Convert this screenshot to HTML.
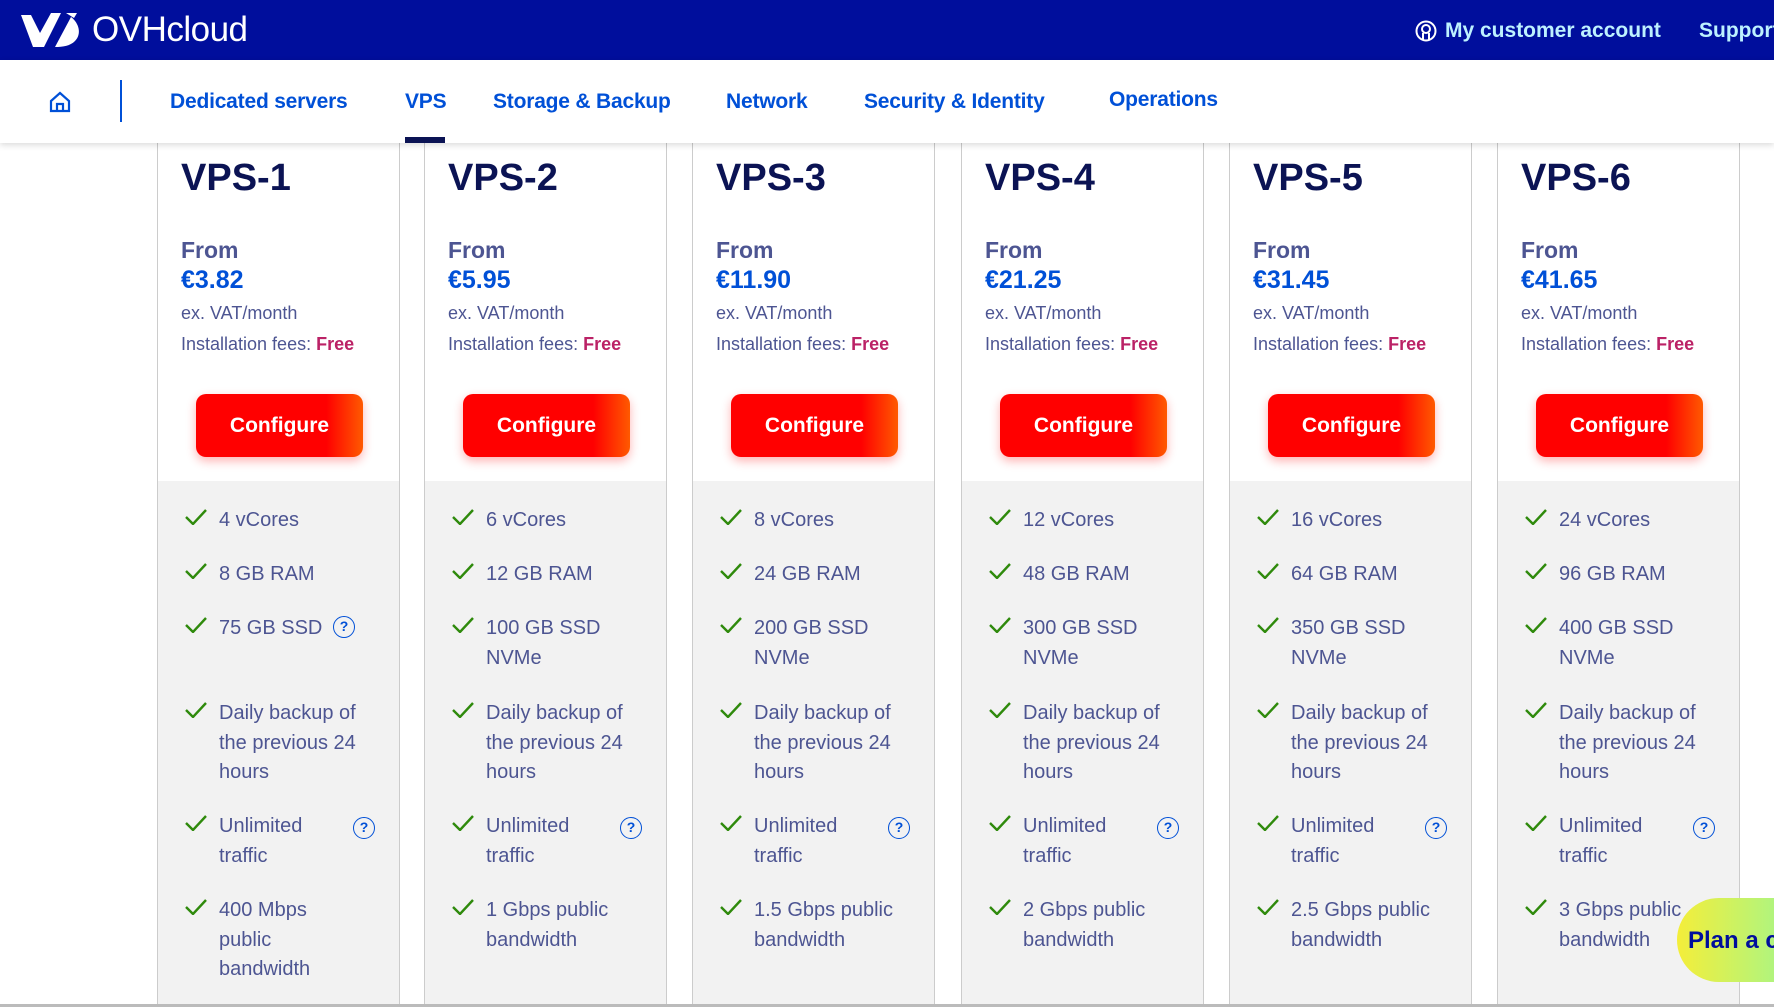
<!DOCTYPE html>
<html><head><meta charset="utf-8"><style>
*{margin:0;padding:0;box-sizing:border-box}
body{width:1774px;height:1007px;overflow:hidden;background:#fff;font-family:"Liberation Sans",sans-serif;position:relative}
.hdr{position:absolute;left:0;top:0;width:1774px;height:60px;background:#000e9c}
.nav{position:absolute;left:0;top:60px;width:1774px;height:83px;background:#fff;box-shadow:0 2px 6px rgba(0,0,0,.15);z-index:5}
.ni{position:absolute;top:90px;font-size:21px;font-weight:bold;color:#0050d7;z-index:6;letter-spacing:-0.2px}
.col{position:absolute;top:143px;width:243px;height:861px;border-left:1px solid #ccc;border-right:1px solid #ccc;background:#fff}
.grey{position:absolute;left:0;top:338px;width:241px;height:523px;background:#f2f2f2}
.t{position:absolute;left:23px;top:14px;font-size:38px;font-weight:bold;color:#0b1354}
.from{position:absolute;top:94px;font-size:23px;font-weight:bold;color:#4d5592}
.abs{position:absolute;left:3px}
.pr{top:123px;font-size:25px;font-weight:bold;color:#0050d7}
.vat{top:160px;font-size:18px;color:#4d5592}
.fee{top:191px;font-size:18px;color:#4d5592}
.fee b{color:#bb2266}
.in{position:absolute;left:23px;top:0;width:200px;height:100%}
.btn{position:absolute;left:37px;top:251px;width:167px;height:63px;border-radius:10px;background:linear-gradient(90deg,#f00 0%,#f00 78%,#ff5a00 100%);box-shadow:0 4px 10px rgba(255,0,0,.3);color:#fff;font-size:21px;font-weight:bold;text-align:center;line-height:63px}
.f{position:absolute;left:61px;font-size:20px;line-height:29.5px;color:#4d5592;width:160px;margin-top:2px}
.ck{position:absolute;left:27px;width:22px;height:16px;margin-top:-4px}
.q{position:absolute;width:22px;height:22px;border:1.6px solid #0050d7;border-radius:50%;color:#0050d7;font-size:14px;font-weight:bold;text-align:center;line-height:19px}
</style></head><body>
<div class="hdr">
<svg style="position:absolute;left:21px;top:12px" width="62" height="36" viewBox="0 0 62 36"><path d="M0 3 L10 3 L19 21 L30 1 L40 1 L23 35 L12 35 Z" fill="#fff"/><path d="M34 35 L50 5 C58 11 61 22 54 29 C49 34 42 35 34 35 Z M45 1 L56 1 L53 6 Z" fill="#fff"/></svg>
<div style="position:absolute;left:92px;top:10px;font-size:35px;color:#fff;letter-spacing:-0.5px">OVHcloud</div>
<svg style="position:absolute;left:1415px;top:20px" width="22" height="22" viewBox="0 0 22 22"><circle cx="11" cy="11" r="9.5" fill="none" stroke="#fff" stroke-width="2"/><circle cx="11" cy="9" r="4" fill="none" stroke="#fff" stroke-width="2"/><path d="M8 20 L8 13 M14 20 L14 13" stroke="#fff" stroke-width="2"/></svg>
<div style="position:absolute;left:1445px;top:19px;font-size:21px;font-weight:bold;color:#bdf1ff">My customer account</div>
<div style="position:absolute;left:1699px;top:19px;font-size:21px;font-weight:bold;color:#bdf1ff;white-space:nowrap">Support</div>
</div>
<div class="nav"></div>
<svg style="position:absolute;left:48px;top:91px;z-index:6" width="24" height="22" viewBox="0 0 24 22"><path d="M3 10 L12 2 L21 10 V20 H3 Z" fill="none" stroke="#0050d7" stroke-width="2.2"/><path d="M9 20 V13 H15 V20" fill="none" stroke="#0050d7" stroke-width="2.2"/></svg>
<div style="position:absolute;left:120px;top:80px;width:2px;height:42px;background:#0050d7;z-index:6"></div>
<div class="ni" style="left:170px">Dedicated servers</div>
<div class="ni" style="left:405px">VPS</div>
<div style="position:absolute;left:405px;top:137px;width:40px;height:6px;background:#0b1354;z-index:6"></div>
<div class="ni" style="left:493px">Storage &amp; Backup</div>
<div class="ni" style="left:726px">Network</div>
<div class="ni" style="left:864px">Security &amp; Identity</div>
<div class="ni" style="left:1109px;top:88px">Operations</div>

<div class="col" style="left:157px"><div class="grey"></div><div class="in">
<div class="t" style="left:0">VPS-1</div><div class="from abs" style="left:0">From</div><div class="abs pr" style="left:0">€3.82</div><div class="abs vat" style="left:0">ex. VAT/month</div><div class="abs fee" style="left:0;white-space:nowrap">Installation fees: <b>Free</b></div></div>
<a class="btn" style="left:38px">Configure</a>
<svg class="ck" style="top:370px" viewBox="0 0 22 16"><path d="M1 8 L8 15 L21 1" fill="none" stroke="#2f8a0c" stroke-width="2.4"/></svg><div class="f" style="top:361px">4 vCores</div>
<svg class="ck" style="top:424px" viewBox="0 0 22 16"><path d="M1 8 L8 15 L21 1" fill="none" stroke="#2f8a0c" stroke-width="2.4"/></svg><div class="f" style="top:415px">8 GB RAM</div>
<svg class="ck" style="top:478px" viewBox="0 0 22 16"><path d="M1 8 L8 15 L21 1" fill="none" stroke="#2f8a0c" stroke-width="2.4"/></svg><div class="f" style="top:469px">75 GB SSD</div><div class="q" style="left:175px;top:473px">?</div>
<svg class="ck" style="top:563px" viewBox="0 0 22 16"><path d="M1 8 L8 15 L21 1" fill="none" stroke="#2f8a0c" stroke-width="2.4"/></svg><div class="f" style="top:554px">Daily backup of the previous 24 hours</div>
<svg class="ck" style="top:676px" viewBox="0 0 22 16"><path d="M1 8 L8 15 L21 1" fill="none" stroke="#2f8a0c" stroke-width="2.4"/></svg><div class="f" style="top:667px;width:100px">Unlimited traffic</div><div class="q" style="left:195px;top:674px">?</div>
<svg class="ck" style="top:760px" viewBox="0 0 22 16"><path d="M1 8 L8 15 L21 1" fill="none" stroke="#2f8a0c" stroke-width="2.4"/></svg><div class="f" style="top:751px;width:100px">400 Mbps public bandwidth</div>
</div>

<div class="col" style="left:424px"><div class="grey"></div><div class="in">
<div class="t" style="left:0">VPS-2</div><div class="from abs" style="left:0">From</div><div class="abs pr" style="left:0">€5.95</div><div class="abs vat" style="left:0">ex. VAT/month</div><div class="abs fee" style="left:0;white-space:nowrap">Installation fees: <b>Free</b></div></div>
<a class="btn" style="left:38px">Configure</a>
<svg class="ck" style="top:370px" viewBox="0 0 22 16"><path d="M1 8 L8 15 L21 1" fill="none" stroke="#2f8a0c" stroke-width="2.4"/></svg><div class="f" style="top:361px">6 vCores</div>
<svg class="ck" style="top:424px" viewBox="0 0 22 16"><path d="M1 8 L8 15 L21 1" fill="none" stroke="#2f8a0c" stroke-width="2.4"/></svg><div class="f" style="top:415px">12 GB RAM</div>
<svg class="ck" style="top:478px" viewBox="0 0 22 16"><path d="M1 8 L8 15 L21 1" fill="none" stroke="#2f8a0c" stroke-width="2.4"/></svg><div class="f" style="top:469px;width:125px">100 GB SSD NVMe</div>
<svg class="ck" style="top:563px" viewBox="0 0 22 16"><path d="M1 8 L8 15 L21 1" fill="none" stroke="#2f8a0c" stroke-width="2.4"/></svg><div class="f" style="top:554px">Daily backup of the previous 24 hours</div>
<svg class="ck" style="top:676px" viewBox="0 0 22 16"><path d="M1 8 L8 15 L21 1" fill="none" stroke="#2f8a0c" stroke-width="2.4"/></svg><div class="f" style="top:667px;width:100px">Unlimited traffic</div><div class="q" style="left:195px;top:674px">?</div>
<svg class="ck" style="top:760px" viewBox="0 0 22 16"><path d="M1 8 L8 15 L21 1" fill="none" stroke="#2f8a0c" stroke-width="2.4"/></svg><div class="f" style="top:751px">1 Gbps public bandwidth</div>
</div>

<div class="col" style="left:692px"><div class="grey"></div><div class="in">
<div class="t" style="left:0">VPS-3</div><div class="from abs" style="left:0">From</div><div class="abs pr" style="left:0">€11.90</div><div class="abs vat" style="left:0">ex. VAT/month</div><div class="abs fee" style="left:0;white-space:nowrap">Installation fees: <b>Free</b></div></div>
<a class="btn" style="left:38px">Configure</a>
<svg class="ck" style="top:370px" viewBox="0 0 22 16"><path d="M1 8 L8 15 L21 1" fill="none" stroke="#2f8a0c" stroke-width="2.4"/></svg><div class="f" style="top:361px">8 vCores</div>
<svg class="ck" style="top:424px" viewBox="0 0 22 16"><path d="M1 8 L8 15 L21 1" fill="none" stroke="#2f8a0c" stroke-width="2.4"/></svg><div class="f" style="top:415px">24 GB RAM</div>
<svg class="ck" style="top:478px" viewBox="0 0 22 16"><path d="M1 8 L8 15 L21 1" fill="none" stroke="#2f8a0c" stroke-width="2.4"/></svg><div class="f" style="top:469px;width:125px">200 GB SSD NVMe</div>
<svg class="ck" style="top:563px" viewBox="0 0 22 16"><path d="M1 8 L8 15 L21 1" fill="none" stroke="#2f8a0c" stroke-width="2.4"/></svg><div class="f" style="top:554px">Daily backup of the previous 24 hours</div>
<svg class="ck" style="top:676px" viewBox="0 0 22 16"><path d="M1 8 L8 15 L21 1" fill="none" stroke="#2f8a0c" stroke-width="2.4"/></svg><div class="f" style="top:667px;width:100px">Unlimited traffic</div><div class="q" style="left:195px;top:674px">?</div>
<svg class="ck" style="top:760px" viewBox="0 0 22 16"><path d="M1 8 L8 15 L21 1" fill="none" stroke="#2f8a0c" stroke-width="2.4"/></svg><div class="f" style="top:751px">1.5 Gbps public bandwidth</div>
</div>

<div class="col" style="left:961px"><div class="grey"></div><div class="in">
<div class="t" style="left:0">VPS-4</div><div class="from abs" style="left:0">From</div><div class="abs pr" style="left:0">€21.25</div><div class="abs vat" style="left:0">ex. VAT/month</div><div class="abs fee" style="left:0;white-space:nowrap">Installation fees: <b>Free</b></div></div>
<a class="btn" style="left:38px">Configure</a>
<svg class="ck" style="top:370px" viewBox="0 0 22 16"><path d="M1 8 L8 15 L21 1" fill="none" stroke="#2f8a0c" stroke-width="2.4"/></svg><div class="f" style="top:361px">12 vCores</div>
<svg class="ck" style="top:424px" viewBox="0 0 22 16"><path d="M1 8 L8 15 L21 1" fill="none" stroke="#2f8a0c" stroke-width="2.4"/></svg><div class="f" style="top:415px">48 GB RAM</div>
<svg class="ck" style="top:478px" viewBox="0 0 22 16"><path d="M1 8 L8 15 L21 1" fill="none" stroke="#2f8a0c" stroke-width="2.4"/></svg><div class="f" style="top:469px;width:125px">300 GB SSD NVMe</div>
<svg class="ck" style="top:563px" viewBox="0 0 22 16"><path d="M1 8 L8 15 L21 1" fill="none" stroke="#2f8a0c" stroke-width="2.4"/></svg><div class="f" style="top:554px">Daily backup of the previous 24 hours</div>
<svg class="ck" style="top:676px" viewBox="0 0 22 16"><path d="M1 8 L8 15 L21 1" fill="none" stroke="#2f8a0c" stroke-width="2.4"/></svg><div class="f" style="top:667px;width:100px">Unlimited traffic</div><div class="q" style="left:195px;top:674px">?</div>
<svg class="ck" style="top:760px" viewBox="0 0 22 16"><path d="M1 8 L8 15 L21 1" fill="none" stroke="#2f8a0c" stroke-width="2.4"/></svg><div class="f" style="top:751px">2 Gbps public bandwidth</div>
</div>

<div class="col" style="left:1229px"><div class="grey"></div><div class="in">
<div class="t" style="left:0">VPS-5</div><div class="from abs" style="left:0">From</div><div class="abs pr" style="left:0">€31.45</div><div class="abs vat" style="left:0">ex. VAT/month</div><div class="abs fee" style="left:0;white-space:nowrap">Installation fees: <b>Free</b></div></div>
<a class="btn" style="left:38px">Configure</a>
<svg class="ck" style="top:370px" viewBox="0 0 22 16"><path d="M1 8 L8 15 L21 1" fill="none" stroke="#2f8a0c" stroke-width="2.4"/></svg><div class="f" style="top:361px">16 vCores</div>
<svg class="ck" style="top:424px" viewBox="0 0 22 16"><path d="M1 8 L8 15 L21 1" fill="none" stroke="#2f8a0c" stroke-width="2.4"/></svg><div class="f" style="top:415px">64 GB RAM</div>
<svg class="ck" style="top:478px" viewBox="0 0 22 16"><path d="M1 8 L8 15 L21 1" fill="none" stroke="#2f8a0c" stroke-width="2.4"/></svg><div class="f" style="top:469px;width:125px">350 GB SSD NVMe</div>
<svg class="ck" style="top:563px" viewBox="0 0 22 16"><path d="M1 8 L8 15 L21 1" fill="none" stroke="#2f8a0c" stroke-width="2.4"/></svg><div class="f" style="top:554px">Daily backup of the previous 24 hours</div>
<svg class="ck" style="top:676px" viewBox="0 0 22 16"><path d="M1 8 L8 15 L21 1" fill="none" stroke="#2f8a0c" stroke-width="2.4"/></svg><div class="f" style="top:667px;width:100px">Unlimited traffic</div><div class="q" style="left:195px;top:674px">?</div>
<svg class="ck" style="top:760px" viewBox="0 0 22 16"><path d="M1 8 L8 15 L21 1" fill="none" stroke="#2f8a0c" stroke-width="2.4"/></svg><div class="f" style="top:751px">2.5 Gbps public bandwidth</div>
</div>

<div class="col" style="left:1497px"><div class="grey"></div><div class="in">
<div class="t" style="left:0">VPS-6</div><div class="from abs" style="left:0">From</div><div class="abs pr" style="left:0">€41.65</div><div class="abs vat" style="left:0">ex. VAT/month</div><div class="abs fee" style="left:0;white-space:nowrap">Installation fees: <b>Free</b></div></div>
<a class="btn" style="left:38px">Configure</a>
<svg class="ck" style="top:370px" viewBox="0 0 22 16"><path d="M1 8 L8 15 L21 1" fill="none" stroke="#2f8a0c" stroke-width="2.4"/></svg><div class="f" style="top:361px">24 vCores</div>
<svg class="ck" style="top:424px" viewBox="0 0 22 16"><path d="M1 8 L8 15 L21 1" fill="none" stroke="#2f8a0c" stroke-width="2.4"/></svg><div class="f" style="top:415px">96 GB RAM</div>
<svg class="ck" style="top:478px" viewBox="0 0 22 16"><path d="M1 8 L8 15 L21 1" fill="none" stroke="#2f8a0c" stroke-width="2.4"/></svg><div class="f" style="top:469px;width:125px">400 GB SSD NVMe</div>
<svg class="ck" style="top:563px" viewBox="0 0 22 16"><path d="M1 8 L8 15 L21 1" fill="none" stroke="#2f8a0c" stroke-width="2.4"/></svg><div class="f" style="top:554px">Daily backup of the previous 24 hours</div>
<svg class="ck" style="top:676px" viewBox="0 0 22 16"><path d="M1 8 L8 15 L21 1" fill="none" stroke="#2f8a0c" stroke-width="2.4"/></svg><div class="f" style="top:667px;width:100px">Unlimited traffic</div><div class="q" style="left:195px;top:674px">?</div>
<svg class="ck" style="top:760px" viewBox="0 0 22 16"><path d="M1 8 L8 15 L21 1" fill="none" stroke="#2f8a0c" stroke-width="2.4"/></svg><div class="f" style="top:751px">3 Gbps public bandwidth</div>
</div>

<div style="position:absolute;left:1677px;top:898px;width:140px;height:84px;border-radius:42px;background:linear-gradient(90deg,#f4ee3a,#94f79a);z-index:8"></div>
<div style="position:absolute;left:1688px;top:927px;font-size:24px;font-weight:bold;color:#000e9c;z-index:9;white-space:nowrap">Plan a call</div>
<div style="position:absolute;left:0;top:1004px;width:1774px;height:3px;background:#bbb;z-index:9"></div>
</body></html>
